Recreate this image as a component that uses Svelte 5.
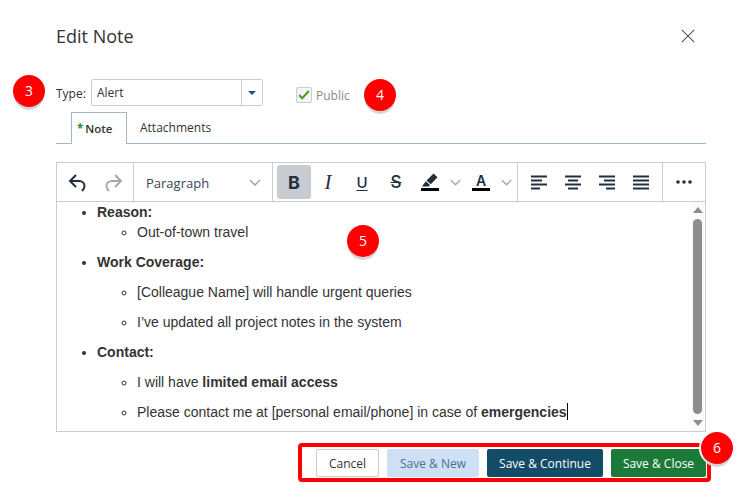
<script>
  const aligns = [
    [[0, 16], [0, 11], [0, 16], [0, 9]],
    [[0, 16], [3, 13], [0, 16], [3, 13]],
    [[0, 16], [5, 16], [0, 16], [7, 16]],
    [[0, 16], [0, 16], [0, 16], [0, 16]]
  ];
</script>

<div class="page">
  <header class="head">
    <h1>Edit Note</h1>
    <svg class="close" width="14" height="14" viewBox="0 0 14 14" fill="none" stroke="#555" stroke-width="1.1">
      <path d="M.8.8l12.4 12.4M13.2.8.8 13.2"/>
    </svg>
  </header>

  <div class="fields">
    <span class="type-label">Type:</span>
    <div class="select">
      <span class="select-value">Alert</span>
      <span class="select-btn"><i class="caret"></i></span>
    </div>
    <label class="public">
      <span class="check">
        <svg width="12" height="10" viewBox="0 0 12 10" fill="none" stroke="#4f9a1c" stroke-width="2"><path d="M1.2 5l3 3.2L10.8 1"/></svg>
      </span>
      Public
    </label>
  </div>

  <nav class="tabs">
    <span class="tab active"><b class="req">*</b>Note</span>
    <span class="tab">Attachments</span>
  </nav>

  <section class="editor">
    <div class="toolbar">
      <div class="group g-history">
        <svg width="20" height="20" viewBox="0 0 20 20" fill="none" stroke="#222f3e" stroke-width="2"><path d="M8 3 2 9l6 6M2.500 9H11c3.300 0 5.500 2.300 5.500 5 0 2-1 3.500-2.500 5"/></svg>
        <svg width="20" height="20" viewBox="0 0 20 20" fill="none" stroke="#a3a9b0" stroke-width="2"><path d="M12 3l6 6-6 6M17.500 9H9C5.700 9 3.500 11.300 3.500 14c0 2 1 3.500 2.500 5"/></svg>
      </div>
      <div class="group g-format">
        <span class="para">Paragraph</span>
        <svg class="chev" width="12" height="7" viewBox="0 0 12 7" fill="none" stroke="#9aa0a8" stroke-width="1.4"><path d="M1 1l5 5 5-5"/></svg>
      </div>
      <div class="group g-style">
        <span class="tool on"><span class="bold-b">B</span></span>
        <span class="tool"><span class="ital">I</span></span>
        <span class="tool"><span class="under">U</span></span>
        <span class="tool"><span class="strike">S</span></span>
        <span class="tool color">
          <svg width="18" height="15" viewBox="0 0 18 15" fill="#222f3e"><path d="M12.500.5 16.500 4.200 9.800 11.300 5.500 7.500zM4.800 8.300l4.200 3.700-1.300 1.500H1z"/></svg>
          <i class="swatch"></i>
        </span>
        <span class="chev-box"><svg width="11" height="7" viewBox="0 0 11 7" fill="none" stroke="#a3a9b0" stroke-width="1.4"><path d="M.8 1l4.700 4.700L10.200 1"/></svg></span>
        <span class="tool color"><span class="letter">A</span><i class="swatch"></i></span>
        <span class="chev-box"><svg width="11" height="7" viewBox="0 0 11 7" fill="none" stroke="#a3a9b0" stroke-width="1.4"><path d="M.8 1l4.700 4.700L10.200 1"/></svg></span>
      </div>
      <div class="group g-align">
        {#each aligns as lines}
          <span class="tool">
            <svg width="16" height="15" viewBox="0 0 16 15" fill="#222f3e">
              {#each lines as [a, b], i}
                <rect x={a} y={i * 4 + 0.5} width={b - a} height="2"/>
              {/each}
            </svg>
          </span>
        {/each}
      </div>
      <div class="group g-more">
        <svg width="16" height="4" viewBox="0 0 16 4" fill="#222f3e"><circle cx="2" cy="2" r="1.8"/><circle cx="8" cy="2" r="1.8"/><circle cx="14" cy="2" r="1.8"/></svg>
      </div>
    </div>

    <div class="body">
      <ul class="outer">
        <li>
          <strong>Reason:</strong>
          <ul><li>Out-of-town travel</li></ul>
        </li>
        <li class="spaced">
          <strong>Work Coverage:</strong>
          <ul>
            <li>[Colleague Name] will handle urgent queries</li>
            <li>I’ve updated all project notes in the system</li>
          </ul>
        </li>
        <li class="spaced">
          <strong>Contact:</strong>
          <ul>
            <li>I will have <strong>limited email access</strong></li>
            <li>Please contact me at [personal email/phone] in case of <strong>emergencies</strong><i class="cursor"></i></li>
          </ul>
        </li>
      </ul>
      <div class="scrollbar">
        <i class="arrow up"></i>
        <i class="thumb"></i>
        <i class="arrow down"></i>
      </div>
    </div>
  </section>

  <footer class="actions">
    <button class="btn cancel">Cancel</button>
    <button class="btn new">Save &amp; New</button>
    <button class="btn cont">Save &amp; Continue</button>
    <button class="btn done">Save &amp; Close</button>
  </footer>

  <!-- callouts sit over the page -->
  <div class="outline"></div>
  <span class="badge b3">3</span>
  <span class="badge b4">4</span>
  <span class="badge b5">5</span>
  <span class="badge b6">6</span>
</div>

<style>
  :global(body) { margin: 0; background: #fff; }

  .page {
    position: relative;
    width: 746px;
    height: 502px;
    overflow: hidden;
    box-sizing: border-box;
    padding: 0 40px 0 56px;
    font-family: "Open Sans", sans-serif;
    color: #333;
  }

  .head {
    height: 72px;
    display: flex;
    justify-content: space-between;
    align-items: flex-start;
    padding-top: 24px;
    box-sizing: border-box;
  }
  h1 {
    margin: 0;
    font-size: 18px;
    line-height: 24px;
    font-weight: 400;
    color: #333;
  }
  .close { margin: 5px 11px 0 0; }

  .fields {
    display: flex;
    align-items: flex-start;
    height: 40px;
    padding-top: 7px;
    box-sizing: border-box;
  }
  .type-label { font-size: 12px; line-height: 16px; margin-top: 7px; width: 35px; }
  .select {
    width: 172px;
    height: 27px;
    box-sizing: border-box;
    border: 1px solid #ccc;
    border-radius: 2px;
    display: flex;
    align-items: center;
    justify-content: space-between;
    font-size: 12px;
  }
  .select-value { padding-left: 5px; }
  .select-btn {
    width: 20px;
    height: 100%;
    border-left: 1px solid #ccc;
    display: flex;
    align-items: center;
    justify-content: center;
  }
  .caret {
    width: 0;
    height: 0;
    border: 4px solid transparent;
    border-top: 4px solid #1f4e79;
    border-bottom: 0;
  }
  .public {
    margin: 8px 0 0 33px;
    display: flex;
    align-items: center;
    gap: 4px;
    font-size: 12px;
    color: #8a8a8a;
  }
  .check {
    width: 14px;
    height: 14px;
    margin-top: -2px;
    border: 1px solid #ccc;
    border-radius: 2px;
    background: #f4f4f4;
    display: flex;
    align-items: center;
    justify-content: center;
  }

  .tabs {
    display: flex;
    height: 32px;
    box-sizing: border-box;
    border-bottom: 1px solid #a3b5cf;
    padding-left: 15px;
    font-size: 12px;
  }
  .tab {
    height: 32px;
    box-sizing: border-box;
    padding: 7px 13px 0;
    color: #333;
  }
  .tab.active {
    border: 1px solid #a3b5cf;
    border-bottom: 0;
    background: #fff;
    padding: 8px 0 0 5px;
    font-size: 11.5px;
    font-weight: 600;
    width: 56px;
  }
  .req { color: #1e8a44; font-weight: 700; margin-right: 2px; }

  .editor {
    margin-top: 18px;
    height: 270px;
    box-sizing: border-box;
    border: 1px solid #ccc;
    display: flex;
    flex-direction: column;
  }
  .toolbar {
    display: flex;
    height: 39px;
    flex: none;
    box-sizing: border-box;
    border-bottom: 1px solid #ccc;
    color: #222f3e;
  }
  .group {
    display: flex;
    align-items: center;
    box-sizing: border-box;
    border-right: 1px solid #ccc;
  }
  .g-history { width: 77px; padding-left: 11px; gap: 15px; }
  .g-format { width: 139px; padding-left: 12px; justify-content: space-between; padding-right: 11px; }
  .para { font-size: 13px; color: #384656; padding-top: 1px; }
  .g-style { width: 245px; padding-left: 4px; }
  .g-align { width: 145px; padding-left: 4px; }
  .g-more { flex: 1; border-right: 0; justify-content: center; }
  .tool {
    width: 34px;
    height: 34px;
    display: flex;
    align-items: center;
    justify-content: center;
    border-radius: 3px;
    flex: none;
  }
  .tool.on { background: #c8cbd0; }
  .bold-b { font: 700 18px "Inter", sans-serif; }
  .ital { font: italic 400 21px "Liberation Serif", serif; }
  .under { font: 500 15px "Inter", sans-serif; text-decoration: underline; text-underline-offset: 2px; }
  .strike { font: 500 17px "Inter", sans-serif; text-decoration: line-through; }
  .letter { font: 600 14px/15px "Inter", sans-serif; }
  .color { flex-direction: column; }
  .swatch { display: block; width: 18px; height: 3px; background: #000; }
  .chev-box { width: 17px; display: flex; justify-content: center; flex: none; }

  .body {
    flex: 1;
    min-height: 0;
    display: flex;
    font-family: "Liberation Sans", sans-serif;
    font-size: 14px;
    line-height: 20px;
    color: #333;
    overflow: hidden;
  }
  .outer { flex: 1; margin: 0; padding: 0 0 0 40px; }
  .outer > li { list-style: disc; }
  .outer ul { margin: 0; padding: 0 0 0 40px; }
  .outer ul li { list-style: circle; }
  .spaced { margin-top: 10px; }
  .spaced > ul { padding-top: 10px; }
  .spaced li + li { margin-top: 10px; }
  strong { font-weight: 700; }
  .cursor {
    display: inline-block;
    width: 1px;
    height: 17px;
    background: #000;
    vertical-align: -3px;
  }
  .scrollbar {
    width: 13px;
    flex: none;
    display: flex;
    flex-direction: column;
    align-items: center;
    margin-right: 1px;
    background: #fafafa;
  }
  .thumb {
    flex: 1;
    width: 9px;
    margin: 6px 0;
    background: #8d8d8d;
    border-radius: 5px;
  }
  .arrow { width: 0; height: 0; border: 5px solid transparent; }
  .arrow.up { border-bottom: 6px solid #8d8d8d; border-top: 0; margin-top: 5px; }
  .arrow.down { border-top: 6px solid #8d8d8d; border-bottom: 0; margin-bottom: 5px; }

  .actions {
    margin: 17px 0 0 0;
    display: flex;
    justify-content: flex-end;
    gap: 8px;
  }
  .btn {
    height: 28px;
    box-sizing: border-box;
    border: 0;
    border-radius: 2px;
    padding: 0;
    font: 400 12px "Open Sans", sans-serif;
    color: #fff;
  }
  .cancel { width: 63px; background: #fff; border: 1px solid #ccc; color: #333; }
  .new { width: 92px; background: #cde0f5; color: #4d6f8f; }
  .cont { width: 116px; background: #124c66; }
  .done { width: 95px; background: #1b7a38; }

  .badge {
    position: absolute;
    width: 32px;
    height: 32px;
    border-radius: 50%;
    background: #f00;
    color: #fff;
    font: 400 14px/32px "Open Sans", sans-serif;
    text-align: center;
    box-shadow: 0 4px 0 -1px #d5d5d5;
  }
  .b3 { left: 13px; top: 75px; }
  .b4 { left: 364px; top: 79px; }
  .b5 { left: 347px; top: 225px; }
  .b6 { left: 701px; top: 432px; box-shadow: 0 4px 0 -1px #d5d5d5, 0 0 0 2px #fff; }

  .outline {
    position: absolute;
    left: 298px;
    top: 443px;
    width: 413px;
    height: 39px;
    box-sizing: border-box;
    border: 4px solid #f00;
    border-radius: 4px;
  }
</style>
